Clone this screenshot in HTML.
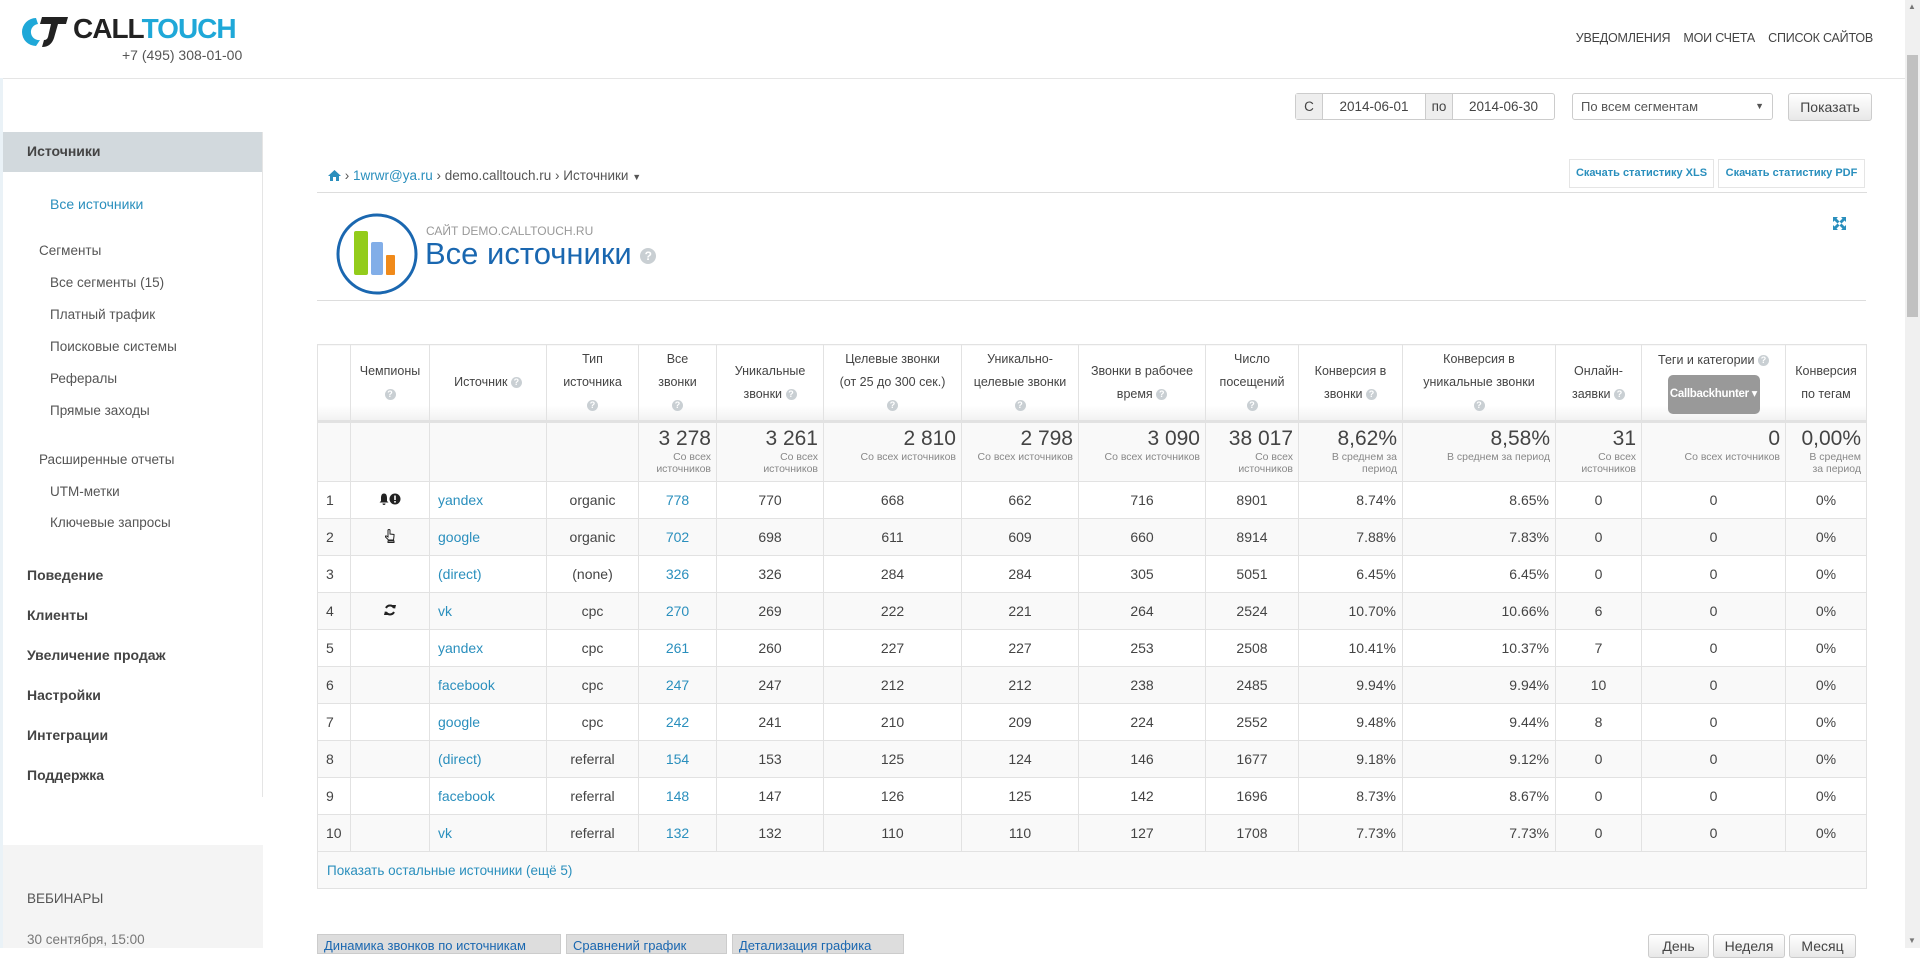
<!DOCTYPE html>
<html><head><meta charset="utf-8">
<style>
*{box-sizing:border-box;margin:0;padding:0}
body{width:1920px;height:948px;overflow:hidden;background:#fff;font-family:"Liberation Sans Narrow","Liberation Sans","DejaVu Sans",sans-serif;color:#444;position:relative}
.a{position:absolute;white-space:nowrap}
.blue{color:#2a8fbd}
.q{display:inline-block;width:11px;height:11px;border-radius:50%;background:#c9cfd3;color:#fff;font-size:9px;line-height:11px;text-align:center;font-weight:bold;vertical-align:middle;font-family:"Liberation Sans",sans-serif}
table{border-collapse:collapse;table-layout:fixed;position:absolute;left:317px;top:344px;width:1549px;font-size:14px}
td,th{border:1px solid #e2e2e2;text-align:center;color:#444}
th{font-weight:normal;font-size:12.5px;line-height:23px;height:77px;background:linear-gradient(#fff 80%,#f1f1f1);border-bottom:3px solid #e2e2e2}
tr.sum td{height:60px;background:#f9f9f9;text-align:right;padding-right:5px;vertical-align:top;padding-top:4px;font-size:21px;line-height:24px}
tr.sum small{display:block;font-size:10.5px;line-height:12px;color:#888}
tr.r td{height:37px}
tr.r:nth-child(even) td{background:#f9f9f9}
td.l{text-align:left;padding-left:8px}
td.rt{text-align:right;padding-right:6px}
.btn{position:absolute;border:1px solid #ccc;border-radius:3px;background:linear-gradient(#fff,#e8e8e8);font-size:14px;color:#444;text-align:center}
.sb{font-size:13.5px;color:#555}
.sbb{font-size:14px;font-weight:bold;color:#444}
</style></head><body>
<svg class="a" style="left:22px;top:14px" width="60" height="36" viewBox="0 0 60 36">
<path d="M14 4 A14 14 0 0 0 14 32 L18 26 A8 8 0 0 1 16 10 Z" fill="#1fa8d8"/>
<path d="M20 3 H46 L44 10 H36 L32 24 Q29 33 20 33 L22 26 Q25 26 26 23 L29 10 H18 Z" fill="#222"/>
</svg>
<div class="a" style="left:73px;top:13px;font-family:'Liberation Sans',sans-serif;font-weight:bold;font-size:28px;letter-spacing:-1px;color:#222">CALL<span style="color:#1fa8d8">TOUCH</span></div>
<div class="a" style="left:122px;top:47px;font-size:14px;color:#555">+7 (495) 308-01-00</div>
<div class="a" style="right:47px;top:31px;font-size:12.5px;color:#444;letter-spacing:-0.2px">УВЕДОМЛЕНИЯ&nbsp;&nbsp;&nbsp;&nbsp;МОИ СЧЕТА&nbsp;&nbsp;&nbsp;&nbsp;СПИСОК САЙТОВ</div>
<div class="a" style="left:0;top:78px;width:1905px;height:1px;background:#e5e5e5"></div>
<div class="a" style="left:1905px;top:0;width:15px;height:948px;background:#f0f0f0"></div>
<div class="a" style="left:1907px;top:55px;width:11px;height:262px;background:#c1c1c1"></div>
<div class="a" style="left:1908px;top:2px;font-size:8px;color:#777">▲</div>
<div class="a" style="left:1908px;top:936px;font-size:8px;color:#777">▼</div>
<div class="a" style="left:1295px;top:93px;width:260px;height:27px;border:1px solid #ccc;border-radius:3px;font-size:13.5px;line-height:25px;display:flex">
<span style="width:27px;background:#eee;text-align:center;border-right:1px solid #ccc">С</span>
<span style="width:102px;text-align:center">2014-06-01</span>
<span style="width:28px;background:#eee;text-align:center;border-left:1px solid #ccc;border-right:1px solid #ccc">по</span>
<span style="flex:1;text-align:center">2014-06-30</span></div>
<div class="a" style="left:1572px;top:93px;width:201px;height:27px;border:1px solid #ccc;border-radius:3px;font-size:13px;line-height:25px;padding-left:8px;color:#555">По всем сегментам<span style="position:absolute;right:8px;font-size:9px">▼</span></div>
<div class="btn" style="left:1788px;top:93px;width:84px;height:28px;line-height:26px">Показать</div>
<div class="a" style="left:0;top:78px;width:3px;height:870px;background:#eaf2f7"></div>
<div class="a" style="left:262px;top:132px;width:1px;height:665px;background:#e5e5e5"></div>
<div class="a" style="left:3px;top:132px;width:259px;height:40px;background:#d2d9dd"></div>
<div class="a" style="left:27px;top:143px;font-size:14px;font-weight:bold;color:#444">Источники</div>
<div class="a blue" style="left:50px;top:196px;font-size:14px">Все источники</div>
<div class="a sb" style="left:39px;top:243px">Сегменты</div>
<div class="a sb" style="left:50px;top:275px">Все сегменты (15)</div>
<div class="a sb" style="left:50px;top:307px">Платный трафик</div>
<div class="a sb" style="left:50px;top:339px">Поисковые системы</div>
<div class="a sb" style="left:50px;top:371px">Рефералы</div>
<div class="a sb" style="left:50px;top:403px">Прямые заходы</div>
<div class="a sb" style="left:39px;top:452px">Расширенные отчеты</div>
<div class="a sb" style="left:50px;top:484px">UTM-метки</div>
<div class="a sb" style="left:50px;top:515px">Ключевые запросы</div>
<div class="a sbb" style="left:27px;top:567px">Поведение</div>
<div class="a sbb" style="left:27px;top:607px">Клиенты</div>
<div class="a sbb" style="left:27px;top:647px">Увеличение продаж</div>
<div class="a sbb" style="left:27px;top:687px">Настройки</div>
<div class="a sbb" style="left:27px;top:727px">Интеграции</div>
<div class="a sbb" style="left:27px;top:767px">Поддержка</div>
<div class="a" style="left:3px;top:845px;width:260px;height:103px;background:#f4f4f4"></div>
<div class="a sb" style="left:27px;top:891px">ВЕБИНАРЫ</div>
<div class="a" style="left:27px;top:932px;font-size:13.5px;color:#777">30 сентября, 15:00</div>
<div class="a" style="left:328px;top:168px;font-size:13.5px;color:#555"><svg width="13" height="11" viewBox="0 0 13 11" style="vertical-align:-1px"><path d="M6.5 0 L13 6 H11 V11 H8 V7 H5 V11 H2 V6 H0 Z" fill="#2a8fbd"/></svg> › <span class="blue">1wrwr@ya.ru</span> › demo.calltouch.ru › Источники <span style="font-size:9px">▼</span></div>
<div class="a" style="left:317px;top:192px;width:1550px;height:1px;background:#ddd"></div>
<div class="a" style="left:1569px;top:159px;width:145px;height:29px;border:1px solid #e5e5e5;font-size:11px;font-weight:bold;line-height:27px;text-align:center;color:#2a8fbd">Скачать статистику XLS</div>
<div class="a" style="left:1718px;top:159px;width:147px;height:29px;border:1px solid #e5e5e5;font-size:11px;font-weight:bold;line-height:27px;text-align:center;color:#2a8fbd">Скачать статистику PDF</div>
<svg class="a" style="left:335px;top:212px" width="84" height="84" viewBox="0 0 84 84">
<circle cx="42" cy="42" r="39" fill="#fff" stroke="#1a67b0" stroke-width="3"/>
<rect x="19" y="19" width="14" height="44" rx="2" fill="#93cc1b"/>
<rect x="36" y="30" width="12" height="33" rx="2" fill="#82aee8"/>
<rect x="51" y="43" width="9" height="20" rx="1" fill="#f08a1a"/>
</svg>
<div class="a" style="left:426px;top:224px;font-size:12px;color:#999">САЙТ DEMO.CALLTOUCH.RU</div>
<div class="a" style="left:425px;top:236px;font-size:31px;color:#1a67b0">Все источники <span class="q" style="width:16px;height:16px;line-height:16px;font-size:12px">?</span></div>
<svg class="a" style="left:1833px;top:217px" width="13" height="13" viewBox="0 0 13 13"><path d="M0 0H5L3.5 1.5 6.5 4.5 4.5 6.5 1.5 3.5 0 5Z M13 0V5L11.5 3.5 8.5 6.5 6.5 4.5 9.5 1.5 8 0Z M0 13V8L1.5 9.5 4.5 6.5 6.5 8.5 3.5 11.5 5 13Z M13 13H8L9.5 11.5 6.5 8.5 8.5 6.5 11.5 9.5 13 8Z" fill="#2a8fbd"/></svg>
<div class="a" style="left:317px;top:300px;width:1549px;height:1px;background:#ddd"></div>
<table>
<colgroup><col style="width:33px"><col style="width:79px"><col style="width:117px"><col style="width:92px"><col style="width:78px"><col style="width:107px"><col style="width:138px"><col style="width:117px"><col style="width:127px"><col style="width:93px"><col style="width:104px"><col style="width:153px"><col style="width:86px"><col style="width:144px"><col style="width:81px"></colgroup>
<tr><th></th><th>Чемпионы<br><span class="q">?</span></th><th>Источник <span class="q">?</span></th><th>Тип<br>источника<br><span class="q">?</span></th><th>Все<br>звонки<br><span class="q">?</span></th><th>Уникальные<br>звонки <span class="q">?</span></th><th>Целевые звонки<br>(от 25 до 300 сек.)<br><span class="q">?</span></th><th>Уникально-<br>целевые звонки<br><span class="q">?</span></th><th>Звонки в рабочее<br>время <span class="q">?</span></th><th>Число<br>посещений<br><span class="q">?</span></th><th>Конверсия в<br>звонки <span class="q">?</span></th><th>Конверсия в<br>уникальные звонки<br><span class="q">?</span></th><th>Онлайн-<br>заявки <span class="q">?</span></th><th style="vertical-align:top;padding-top:6px;line-height:18px">Теги и категории <span class="q">?</span><div style="margin:6px auto 0;width:92px;height:39px;border-radius:5px;background:#999;color:#fff;font-weight:bold;font-size:11.5px;line-height:39px;letter-spacing:-0.3px">Callbackhunter ▾</div></th><th>Конверсия<br>по тегам</th></tr>
<tr class="sum"><td></td><td></td><td></td><td></td><td>3 278<small>Со всех<br>источников</small></td><td>3 261<small>Со всех<br>источников</small></td><td>2 810<small>Со всех источников</small></td><td>2 798<small>Со всех источников</small></td><td>3 090<small>Со всех источников</small></td><td>38 017<small>Со всех<br>источников</small></td><td>8,62%<small>В среднем за<br>период</small></td><td>8,58%<small>В среднем за период</small></td><td>31<small>Со всех<br>источников</small></td><td>0<small>Со всех источников</small></td><td>0,00%<small>В среднем<br>за период</small></td></tr>
<tr class="r"><td class="l">1</td><td><svg width="22" height="12" viewBox="0 0 22 12"><path d="M5 0.5C2.5 0.5 2 3 2 5V8L0.5 9.5H9.5L8 8V5C8 3 7.5 0.5 5 0.5ZM3.5 10.5H6.5A1.5 1.5 0 0 1 3.5 10.5Z" fill="#222"/><circle cx="16" cy="6" r="5.5" fill="#222"/><rect x="15.2" y="2.5" width="1.6" height="4.5" fill="#fff"/><rect x="15.2" y="8" width="1.6" height="1.6" fill="#fff"/></svg></td><td class="l blue">yandex</td><td>organic</td><td class="blue">778</td><td>770</td><td>668</td><td>662</td><td>716</td><td>8901</td><td class="rt">8.74%</td><td class="rt">8.65%</td><td>0</td><td>0</td><td>0%</td></tr>
<tr class="r"><td class="l">2</td><td><svg width="10" height="14" viewBox="0 0 10 14"><path d="M3 1V8L1.5 7C0.5 6.5 0 7.5 0.7 8.2L3.5 11H8.5L9 7V5.5L5 5V1Q4 0 3 1Z M3 12H9V13.5H3Z" fill="none" stroke="#222" stroke-width="1"/></svg></td><td class="l blue">google</td><td>organic</td><td class="blue">702</td><td>698</td><td>611</td><td>609</td><td>660</td><td>8914</td><td class="rt">7.88%</td><td class="rt">7.83%</td><td>0</td><td>0</td><td>0%</td></tr>
<tr class="r"><td class="l">3</td><td></td><td class="l blue">(direct)</td><td>(none)</td><td class="blue">326</td><td>326</td><td>284</td><td>284</td><td>305</td><td>5051</td><td class="rt">6.45%</td><td class="rt">6.45%</td><td>0</td><td>0</td><td>0%</td></tr>
<tr class="r"><td class="l">4</td><td><svg width="12" height="12" viewBox="0 0 12 12"><path d="M10 4A4.5 4.5 0 0 0 2 4M2 8A4.5 4.5 0 0 0 10 8" fill="none" stroke="#222" stroke-width="2"/><path d="M8 1L12 1L11 5Z M4 11L0 11L1 7Z" fill="#222"/></svg></td><td class="l blue">vk</td><td>cpc</td><td class="blue">270</td><td>269</td><td>222</td><td>221</td><td>264</td><td>2524</td><td class="rt">10.70%</td><td class="rt">10.66%</td><td>6</td><td>0</td><td>0%</td></tr>
<tr class="r"><td class="l">5</td><td></td><td class="l blue">yandex</td><td>cpc</td><td class="blue">261</td><td>260</td><td>227</td><td>227</td><td>253</td><td>2508</td><td class="rt">10.41%</td><td class="rt">10.37%</td><td>7</td><td>0</td><td>0%</td></tr>
<tr class="r"><td class="l">6</td><td></td><td class="l blue">facebook</td><td>cpc</td><td class="blue">247</td><td>247</td><td>212</td><td>212</td><td>238</td><td>2485</td><td class="rt">9.94%</td><td class="rt">9.94%</td><td>10</td><td>0</td><td>0%</td></tr>
<tr class="r"><td class="l">7</td><td></td><td class="l blue">google</td><td>cpc</td><td class="blue">242</td><td>241</td><td>210</td><td>209</td><td>224</td><td>2552</td><td class="rt">9.48%</td><td class="rt">9.44%</td><td>8</td><td>0</td><td>0%</td></tr>
<tr class="r"><td class="l">8</td><td></td><td class="l blue">(direct)</td><td>referral</td><td class="blue">154</td><td>153</td><td>125</td><td>124</td><td>146</td><td>1677</td><td class="rt">9.18%</td><td class="rt">9.12%</td><td>0</td><td>0</td><td>0%</td></tr>
<tr class="r"><td class="l">9</td><td></td><td class="l blue">facebook</td><td>referral</td><td class="blue">148</td><td>147</td><td>126</td><td>125</td><td>142</td><td>1696</td><td class="rt">8.73%</td><td class="rt">8.67%</td><td>0</td><td>0</td><td>0%</td></tr>
<tr class="r"><td class="l">10</td><td></td><td class="l blue">vk</td><td>referral</td><td class="blue">132</td><td>132</td><td>110</td><td>110</td><td>127</td><td>1708</td><td class="rt">7.73%</td><td class="rt">7.73%</td><td>0</td><td>0</td><td>0%</td></tr>
<tr><td colspan="15" style="height:37px;text-align:left;padding-left:9px;background:#f9f9f9;font-size:13.5px" class="blue">Показать остальные источники (ещё 5)</td></tr>
</table>
<div class="a" style="left:317px;top:934px;width:244px;height:20px;background:#ddd;border:1px solid #ccc;font-size:13px;color:#1a67b0;padding:3px 6px;overflow:hidden">Динамика звонков по источникам</div>
<div class="a" style="left:566px;top:934px;width:161px;height:20px;background:#ddd;border:1px solid #ccc;font-size:13px;color:#1a67b0;padding:3px 6px;overflow:hidden">Сравнений график</div>
<div class="a" style="left:732px;top:934px;width:172px;height:20px;background:#ddd;border:1px solid #ccc;font-size:13px;color:#1a67b0;padding:3px 6px;overflow:hidden">Детализация графика</div>
<div class="btn" style="left:1648px;top:934px;width:61px;height:24px;line-height:22px">День</div>
<div class="btn" style="left:1713px;top:934px;width:72px;height:24px;line-height:22px">Неделя</div>
<div class="btn" style="left:1789px;top:934px;width:67px;height:24px;line-height:22px">Месяц</div>
</body></html>
